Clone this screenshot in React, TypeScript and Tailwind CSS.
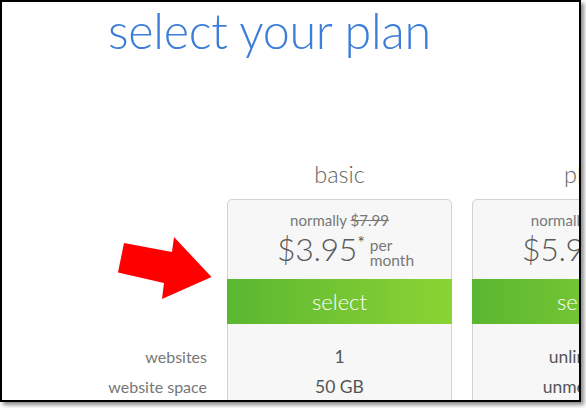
import React from 'react';

type Plan = {
  name: string;
  normally: string;
  price: string;
  rows: string[];
};

const plans: Plan[] = [
  { name: 'basic', normally: '$7.99', price: '$3.95', rows: ['1', '50 GB'] },
  { name: 'plus', normally: '$10.99', price: '$5.95', rows: ['unlimited', 'unmetered'] },
];

const labels = ['websites', 'website space'];

const Arrow = () => (
  <svg className="absolute left-[114px] top-[233px]" width="100" height="66" viewBox="114 233 100 66">
    <polygon
      points="122,241 170,250 172,235 209.5,275 160,297 162,281 116,270.5"
      fill="#ff0000"
    />
  </svg>
);

const PlanColumn = ({ plan }: { plan: Plan }) => (
  <div className="w-[225px] shrink-0 flex flex-col">
    <div className="h-[40px] flex items-start justify-center text-[23.5px] font-light text-[#666] leading-[26px] pt-[2px]">
      {plan.name}
    </div>
    <div className="flex-1 rounded-t-[5px] border border-[#d2d2d2] bg-[#f7f7f7] flex flex-col">
      <div className="h-[79px] flex flex-col items-center pt-[11px]">
        <div className="text-[15px] leading-[18px] text-[#777]">
          normally <span className="line-through">{plan.normally}</span>
        </div>
        <div className="flex items-start text-[#5a5a5a] ml-[12px]">
          <span className="text-[32px] font-light leading-[40px] tracking-[-0.3px]">{plan.price}</span>
          <span className="text-[18px] leading-[18px] mt-[4px]">*</span>
          <span className="ml-[5px] mt-[9px] text-[15.5px] leading-[15px] text-[#777] flex flex-col">
            <span>per</span>
            <span>month</span>
          </span>
        </div>
      </div>
      <div className="-mx-px h-[45px] bg-gradient-to-r from-[#5ab731] to-[#8bd333] flex items-center justify-center text-white text-[22px] font-light">
        select
      </div>
      <div className="pt-[18px] flex flex-col">
        {plan.rows.map(r => (
          <div key={r} className="h-[30px] flex items-center justify-center text-[17.5px] text-[#555]">
            {r}
          </div>
        ))}
      </div>
    </div>
  </div>
);

export default function App() {
  return (
    <div className="w-[586px] h-[408px] bg-white" style={{ fontFamily: 'Lato, "Open Sans", sans-serif' }}>
      <div className="relative w-[581px] h-[402px] border-2 border-black bg-white overflow-hidden shadow-[3px_3px_4px_rgba(0,0,0,0.45)]">
        <h1 className="pl-[106px] text-[48.5px] font-light leading-[56px] text-[#3b7dd8] tracking-[-0.3px]">
          select your plan
        </h1>
        <div className="mt-[101px] flex gap-[20px]">
          <div className="w-[205px] shrink-0 flex flex-col items-end pt-[183px] text-[16px] text-[#777]">
            {labels.map(l => (
              <div key={l} className="h-[30px] flex items-center">{l}</div>
            ))}
          </div>
          {plans.map(p => (
            <PlanColumn key={p.name} plan={p} />
          ))}
        </div>
        <Arrow />
      </div>
    </div>
  );
}
